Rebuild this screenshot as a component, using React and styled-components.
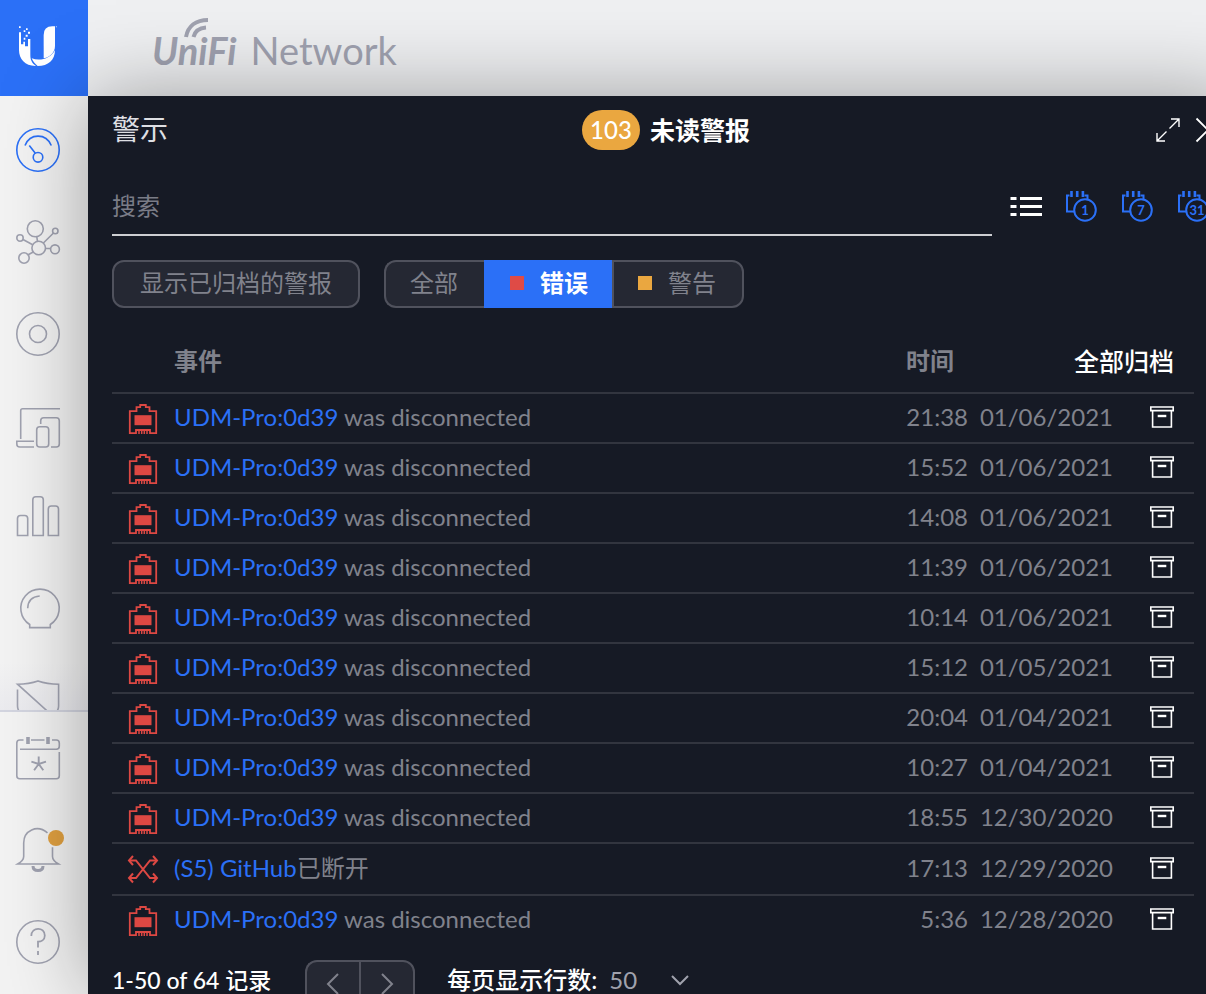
import React, { useState } from 'react';
import styled, { createGlobalStyle, css } from 'styled-components';

const GlobalStyle = createGlobalStyle`
    * {
        box-sizing: border-box;
    }
    body {
        margin: 0;
        background: #f2f2f3;
        font-family: Lato, 'Noto Sans CJK SC', sans-serif;
        font-size: 24px;
        line-height: 32px;
        color: #80828c;
    }
    button, input, select {
        font: inherit;
        color: inherit;
    }
    button {
        padding: 0;
        border: none;
        background: none;
        cursor: pointer;
    }
    a {
        text-decoration: none;
    }
    svg {
        display: block;
        flex: none;
        overflow: visible;
    }
`

const Page = styled.div`
    display: grid;
    grid-template-columns: 88px minmax(0, 1fr);
    grid-template-rows: 96px minmax(0, 1fr);
    height: 100vh;
    overflow: hidden;
`

const LogoLink = styled.a`
    display: flex;
    align-items: center;
    padding: 0 0 4px 18px;
    background: #2b70f7;
`

const TopBar = styled.header`
    display: flex;
    align-items: center;
    padding: 4px 0 0 64px;
    background: #eff0f2;
`

const Brand = styled.div`
    display: flex;
    align-items: baseline;
    gap: 14px;
    color: #a0a2b0;
    line-height: 48px;
`

const BrandName = styled.span`
    position: relative;
    font-size: 38px;
    font-weight: 700;
    font-style: italic;
    svg {
        position: absolute;
        left: 31px;
        top: -9px;
    }
`

const BrandProduct = styled.span`
    font-size: 38px;
`

const SideBar = styled.nav`
    display: flex;
    flex-direction: column;
    min-height: 0;
    background: #f3f3f3;
`

const NavGroup = styled.div`
    display: flex;
    flex-direction: column;
    gap: 48px;
    padding: 32px 0 0 16px;
    flex: 1;
    min-height: 0;
    overflow: hidden;
    background: linear-gradient(to top, #ebebef, transparent 48px);
`

const NavFooter = styled(NavGroup)`
    flex: none;
    padding: 24px 0 30px 16px;
    border-top: 2px solid #d3d5e0;
    background: #f3f3f3;
`

const NavLink = styled.a`
    width: 44px;
    height: 44px;
    flex: none;
    color: ${props => props.$active ? '#2b70f7' : '#a0a2b0'};
`

// 面板比可视区域宽, 右侧超出部分被裁掉
const Panel = styled.main`
    position: relative;
    display: flex;
    flex-direction: column;
    margin-right: -38px;
    padding: 0 24px;
    background: #161a25;
    box-shadow: 0 0 80px rgba(0, 0, 0, 0.35);
`

const PanelHeader = styled.div`
    display: grid;
    grid-template-columns: 1fr auto 1fr;
    align-items: center;
    height: 68px;
    flex: none;
    color: #fff;
`

const PanelTitle = styled.h1`
    margin: 0;
    padding-bottom: 2px;
    font-size: 28px;
    font-weight: 400;
    color: #dedfe3;
`

const Unread = styled.div`
    display: flex;
    align-items: center;
    gap: 10px;
    font-size: 25px;
    font-weight: 700;
`

const Badge = styled.span`
    padding: 0 8px;
    border-radius: 20px;
    background: #eaa740;
    font-size: 24px;
    font-weight: 500;
    line-height: 40px;
`

const PanelActions = styled.div`
    display: flex;
    justify-content: flex-end;
    gap: 16px;
`

const IconButton = styled.button`
    flex: none;
    color: ${props => props.$color || '#fff'};
`

const ToolBar = styled.div`
    display: flex;
    gap: 18px;
    padding: 12px 10px 0 0;
    flex: none;
`

const SearchInput = styled.input`
    flex: 1;
    min-width: 0;
    height: 60px;
    padding: 0;
    border: none;
    border-bottom: 2px solid #cdced2;
    outline: none;
    background: none;
    &::placeholder {
        color: #7a7c87;
        opacity: 1;
    }
`

const RangeGroup = styled.div`
    display: flex;
    align-items: center;
    gap: 24px;
`

const Filters = styled.div`
    display: flex;
    gap: 24px;
    padding-top: 24px;
    flex: none;
`

const FilterButton = styled.button`
    display: flex;
    align-items: center;
    gap: 16px;
    height: 48px;
    padding: 0 26px 2px 24px;
    border: 2px solid #50525d;
    border-radius: 12px;
    background: #252833;
    ${props => !props.$joined && css`
        padding-right: 24px;
        padding-left: 24px;
        min-width: 248px;
        justify-content: center;
    `}
    ${props => props.$joined === 'start' && css`
        border-right: none;
        border-radius: 12px 0 0 12px;
    `}
    ${props => props.$joined === 'middle' && css`
        border: none;
        border-radius: 0;
        padding-right: 24px;
        padding-left: 26px;
    `}
    ${props => props.$joined === 'end' && css`
        border-radius: 0 12px 12px 0;
    `}
    ${props => props.$active && css`
        background: #2b70f7;
        color: #fff;
        font-weight: 700;
    `}
`

const Segments = styled.div`
    display: flex;
`

const Square = styled.i`
    width: 14px;
    height: 14px;
    background: ${props => props.$color};
`

const TableWrapper = styled.div`
    padding: 20px 26px 0 0;
    flex: none;
`

const Table = styled.table`
    width: 100%;
    table-layout: fixed;
    border-collapse: separate;
    border-spacing: 0;
    th, td {
        padding: 0 0 2px;
        border-bottom: 2px solid #32353f;
        text-align: left;
        white-space: nowrap;
    }
    th {
        padding: 2px 0 0;
    }
    tr:last-child td {
        border-bottom-color: transparent;
    }
    col:nth-child(1) { width: 62px; }
    col:nth-child(3) { width: 62px; }
    col:nth-child(4) { width: 145px; }
    col:nth-child(5) { width: 81px; }
`

const HeadRow = styled.tr`
    height: 66px;
`

const Row = styled.tr`
    height: ${props => props.$tall ? 52 : 50}px;
`

const IconCell = styled.td`
    && { padding: 2px 0 0 16px; }
    color: #dd4843;
`

const RightCell = styled.td`
    && { text-align: right; }
`

const ActionCell = styled(RightCell)`
    && { padding-right: 20px; }
`

const ArchiveButton = styled(IconButton)`
    display: block;
    margin-left: auto;
`

const DeviceLink = styled.a`
    color: #2b70f7;
`

const ArchiveAll = styled.button`
    color: #fff;
    font-size: 25px;
    font-weight: 500;
`

const Pager = styled.div`
    display: flex;
    align-items: flex-start;
    padding-top: 14px;
    color: #fff;
    line-height: 40px;
    font-weight: 500;
    flex: none;
`

const Records = styled.span`
    font-size: 23px;
`

const PageButtons = styled.div`
    display: flex;
    margin: 0 32px 0 34px;
    color: #80828c;
`

const PageButton = styled.button`
    display: flex;
    align-items: center;
    justify-content: center;
    width: 54px;
    height: 48px;
    border: 2px solid #50525d;
    border-right: none;
    border-radius: 12px 0 0 12px;
    background: #252833;
    &:last-child {
        width: 56px;
        border-right: 2px solid #50525d;
        border-radius: 0 12px 12px 0;
    }
`

const PageSize = styled.label`
    display: flex;
    align-items: center;
    gap: 12px;
`

const SelectBox = styled.span`
    display: flex;
    align-items: center;
    color: #a0a2ad;
    font-weight: 400;
    select {
        appearance: none;
        width: 62px;
        height: 40px;
        padding: 0;
        border: none;
        background: none;
        outline: none;
    }
`

const NavIcon = ({ children }) => (
    <svg width="44" height="44" viewBox="0 0 44 44" fill="none" stroke="currentColor" strokeWidth="1.6">
        {children}
    </svg>
)

const UbiquitiLogo = () => (
    <svg width="39" height="42" viewBox="54 74 117 126" fill="#fff">
        <path d="M57 78h5v5h-5zM78 84h5v5h-5zM71 90h5v5h-5zM84 94h6v6h-6zM77 103h6v6h-6zM71 112h5v6h-5z" />
        <path d="M57 96h6v36h7v-8h5v14h9v-22h7v48c0 14 4 24 17 33C76 198 57 176 57 150z" />
        <path d="M131 174V104q0-26 26-26h8v58c0 20-14 34-34 38z" />
        <path d="M95 174c26 10 58 0 70-25 0 30-20 48-52 48-8-6-14-13-18-23z" />
        <circle cx="169" cy="79" r="1.5" />
    </svg>
)

const WifiArcs = () => (
    <svg width="28" height="22" viewBox="0 0 28 22" fill="none" stroke="currentColor" strokeWidth="4">
        <path d="M3 20C5 9 13 3 25 3" />
        <path d="M10.500 20C12 14 16 11 23 10.500" />
    </svg>
)

const ExpandIcon = () => (
    <svg width="24" height="24" viewBox="0 0 24 24" fill="none" stroke="currentColor" strokeWidth="1.4">
        <path d="M15 1h8v8M23 1l-9.500 9.500M1 15v8h8M1 23l9.500-9.500" />
    </svg>
)

const CloseIcon = () => (
    <svg width="24" height="24" viewBox="0 0 24 24" fill="none" stroke="currentColor" strokeWidth="1.8">
        <path d="M.5.5l23 23M23.500.5l-23 23" />
    </svg>
)

const ListIcon = () => (
    <svg width="32" height="32" viewBox="0 0 32 32" stroke="currentColor" strokeWidth="3">
        <path d="M.5 8.500h6M.5 16.500h6M.5 24.500h6M10 8.500h22M10 16.500h22M10 24.500h22" />
    </svg>
)

const RangeIcon = ({ days }) => (
    <svg width="32" height="32" viewBox="0 0 32 32" fill="none" stroke="currentColor" strokeWidth="2">
        <path d="M3.500 5.500H1V21.500H8M18.500 5.500h3v3.500" />
        <path d="M5.500 1v6M11.200 1v6M16.900 1v6" strokeWidth="2.600" />
        <circle cx="19" cy="20" r="10.800" />
        <text x="19" y="24.500" fontSize="13" fontWeight="700" textAnchor="middle" fill="currentColor" stroke="none">{days}</text>
    </svg>
)

const EthernetIcon = () => (
    <svg width="30" height="30" viewBox="0 0 30 30" fill="none" stroke="currentColor" strokeWidth="1.800">
        <path d="M1.800 29.200V7.200H8.500V3.200H12.200V1H17.800V3.200H21.500V7.200H28.200V29.200H22V26H8V29.200Z" />
        <path d="M11 26v4M13.700 26v4M16.300 26v4M19 26v4" strokeWidth="1.500" />
        <path d="M6.500 11.200h17v10h-17z" fill="currentColor" stroke="none" />
    </svg>
)

const CrossIcon = () => (
    <svg width="30" height="30" viewBox="0 0 30 30" fill="none" stroke="currentColor" strokeWidth="2">
        <path d="M1 5.500H8L22 23H29M1 23H8L22 5.500H29" />
        <path d="M5 1L1 5.500 5 10M25 1l4 4.500L25 10M5 18.500L1 23l4 4.500M25 18.500l4 4.500-4 4.500" />
    </svg>
)

const ArchiveIcon = () => (
    <svg width="24" height="22" viewBox="0 0 24 22" fill="none" stroke="currentColor" strokeWidth="1.600">
        <path d="M.8 1h22.400v3.600H.8zM2.600 4.600V21h18.800V4.600" />
        <path d="M7.700 10h8.600" strokeWidth="2.400" />
    </svg>
)

const Chevron = ({ d, width, height }) => (
    <svg width={width} height={height} viewBox={`0 0 ${width} ${height}`} fill="none" stroke="currentColor" strokeWidth="2">
        <path d={d} />
    </svg>
)

const mainNav = [
    {
        label: '仪表板',
        active: true,
        icon: <><circle cx="22" cy="22" r="21.200" /><path d="M9 17.500C14 5 30 5 35.300 17.500M13.300 17.500l6 7.800" /><circle cx="22" cy="29.300" r="4.800" /></>,
    },
    {
        label: '拓扑',
        icon: <>
            <circle cx="19.300" cy="8.800" r="8" /><circle cx="4" cy="18" r="3.200" /><circle cx="39.300" cy="11" r="2.700" />
            <circle cx="22.700" cy="28" r="6.800" /><circle cx="39" cy="29.300" r="4.400" /><circle cx="8" cy="38" r="5.200" />
            <path d="M20.800 16.800l.7 4.500M7 19.500l9.700 5.300M37.500 13L27.400 23M29.500 28.500h5M12.200 34.800l5-2.800" />
        </>,
    },
    {
        label: '设备',
        icon: <><circle cx="22" cy="22" r="21.200" /><circle cx="22" cy="22" r="8.500" /></>,
    },
    {
        label: '客户端',
        icon: <>
            <path d="M44 4.700H6.700q-2 0-2 2V35M18 37.300H.8V40q0 3 3 3H18" />
            <rect x="20.700" y="22.700" width="12" height="20.300" rx="3" />
            <path d="M24.700 20v-3.300q0-3 3-3h12.600q3 0 3 3V40q0 3-3 3H35" />
        </>,
    },
    {
        label: '统计',
        icon: <>
            <path d="M1.500 39.500V22.500q0-3 3-3h4.200q3 0 3 3v17zM16.800 39.500V3.800q0-3 3-3h4.500q3 0 3 3v35.700zM32.300 39.500V13q0-3 3-3h4.200q3 0 3 3v26.500z" />
        </>,
    },
    {
        label: '洞察',
        icon: <path d="M13.700 39.600V36.500A19.200 19.200 0 1 1 34.300 36.500V39.600ZM11.700 20.300Q12 9 23.700 8" />,
    },
    {
        label: '安全',
        icon: <path d="M1.500 9.500V26q0 10 20.500 17Q42.600 36 42.600 26V4.200Q31 4 22 .9 13 4 1.500 4.200L34 33.500" />,
    },
]

const footerNav = [
    {
        label: '事件',
        icon: <>
            <path d="M7.500 4H3.800q-3 0-3 3V39.700q0 3 3 3H40.300q3 0 3-3V16M4 13.300H40.300q3 0 3-3V7q0-3-3-3H36M15 4H28.500" />
            <path d="M12 1v7M32 1v7" strokeWidth="3.600" />
            <path d="M22.700 28v-7.500M22.700 28l-7.300-2.300M22.700 28l-4.600 6.200M22.700 28l4.600 6.200M22.700 28l7.300-2.300" strokeWidth="1.900" />
        </>,
    },
    {
        label: '警示',
        icon: <>
            <path d="M31.500 4.800C21-4 7.700 2.500 7.700 15V28.500q0 4-6 7.500H42.500q-6-3.500-6-7.500V19.300" />
            <path d="M17 38q0 4.500 5 4.500T27 38" strokeWidth="3" />
            <circle cx="40" cy="10" r="8" fill="#e0a040" stroke="none" />
        </>,
    },
    {
        label: '帮助',
        icon: <>
            <circle cx="22" cy="22" r="21.200" />
            <path d="M15.300 16C15.300 6.500 28.800 6.500 28.800 15.500C28.800 20 25 21.700 22 21.700V27.500M22 31v4" strokeWidth="1.800" />
        </>,
    },
]

const events = [
    { time: '21:38', date: '01/06/2021' },
    { time: '15:52', date: '01/06/2021' },
    { time: '14:08', date: '01/06/2021' },
    { time: '11:39', date: '01/06/2021' },
    { time: '10:14', date: '01/06/2021' },
    { time: '15:12', date: '01/05/2021' },
    { time: '20:04', date: '01/04/2021' },
    { time: '10:27', date: '01/04/2021' },
    { time: '18:55', date: '12/30/2020' },
    { time: '17:13', date: '12/29/2020', name: '(S5) GitHub', text: '已断开', isPath: true },
    { time: '5:36', date: '12/28/2020' },
]

const NavItem = ({ item }) => (
    <NavLink href="#" aria-label={item.label} $active={item.active}>
        <NavIcon>{item.icon}</NavIcon>
    </NavLink>
)

const EventRow = ({ event }) => {
    const { time, date, isPath, name = 'UDM-Pro:0d39', text = ' was disconnected' } = event;
    return (
        <Row $tall={isPath}>
            <IconCell>{isPath ? <CrossIcon /> : <EthernetIcon />}</IconCell>
            <td><DeviceLink href="#">{name}</DeviceLink>{text}</td>
            <RightCell>{time}</RightCell>
            <RightCell>{date}</RightCell>
            <ActionCell>
                <ArchiveButton aria-label="归档"><ArchiveIcon /></ArchiveButton>
            </ActionCell>
        </Row>
    )
}

const App = () => {
    const [query, setQuery] = useState('');
    const [level, setLevel] = useState('error');

    return (
        <Page>
            <GlobalStyle />
            <LogoLink href="#" aria-label="Ubiquiti"><UbiquitiLogo /></LogoLink>
            <TopBar>
                <Brand>
                    <BrandName>UniFi<WifiArcs /></BrandName>
                    <BrandProduct>Network</BrandProduct>
                </Brand>
            </TopBar>
            <SideBar>
                <NavGroup>
                    {mainNav.map(item => <NavItem key={item.label} item={item} />)}
                </NavGroup>
                <NavFooter>
                    {footerNav.map(item => <NavItem key={item.label} item={item} />)}
                </NavFooter>
            </SideBar>
            <Panel>
                <PanelHeader>
                    <PanelTitle>警示</PanelTitle>
                    <Unread><Badge>103</Badge>未读警报</Unread>
                    <PanelActions>
                        <IconButton aria-label="展开"><ExpandIcon /></IconButton>
                        <IconButton aria-label="关闭"><CloseIcon /></IconButton>
                    </PanelActions>
                </PanelHeader>
                <ToolBar>
                    <SearchInput
                        type="text"
                        aria-label="搜索"
                        placeholder="搜索"
                        value={query}
                        onChange={e => setQuery(e.target.value)}
                    />
                    <RangeGroup>
                        <IconButton aria-label="列表"><ListIcon /></IconButton>
                        {[1, 7, 31].map(days => (
                            <IconButton key={days} $color="#2b70f7"><RangeIcon days={days} /></IconButton>
                        ))}
                    </RangeGroup>
                </ToolBar>
                <Filters>
                    <FilterButton>显示已归档的警报</FilterButton>
                    <Segments>
                        <FilterButton $joined="start" $active={level === 'all'} onClick={() => setLevel('all')}>
                            全部
                        </FilterButton>
                        <FilterButton $joined="middle" $active={level === 'error'} onClick={() => setLevel('error')}>
                            <Square $color="#df4b46" />错误
                        </FilterButton>
                        <FilterButton $joined="end" $active={level === 'warning'} onClick={() => setLevel('warning')}>
                            <Square $color="#eaa740" />警告
                        </FilterButton>
                    </Segments>
                </Filters>
                <TableWrapper>
                    <Table>
                        <colgroup><col /><col /><col /><col /><col /></colgroup>
                        <thead>
                            <HeadRow>
                                <th></th>
                                <th>事件</th>
                                <th>时间</th>
                                <ActionCell as="th" colSpan={2}><ArchiveAll>全部归档</ArchiveAll></ActionCell>
                            </HeadRow>
                        </thead>
                        <tbody>
                            {events.map(event => <EventRow key={event.time + event.date} event={event} />)}
                        </tbody>
                    </Table>
                </TableWrapper>
                <Pager>
                    <Records>1-50 of 64 记录</Records>
                    <PageButtons>
                        <PageButton aria-label="上一页"><Chevron d="M11 1L1 11l10 10" width={12} height={22} /></PageButton>
                        <PageButton aria-label="下一页"><Chevron d="M1 1l10 10L1 21" width={12} height={22} /></PageButton>
                    </PageButtons>
                    <PageSize>
                        每页显示行数:
                        <SelectBox>
                            <select defaultValue="50">
                                <option>50</option>
                                <option>100</option>
                            </select>
                            <Chevron d="M1 1l8 8 8-8" width={18} height={11} />
                        </SelectBox>
                    </PageSize>
                </Pager>
            </Panel>
        </Page>
    )
}

export default App
